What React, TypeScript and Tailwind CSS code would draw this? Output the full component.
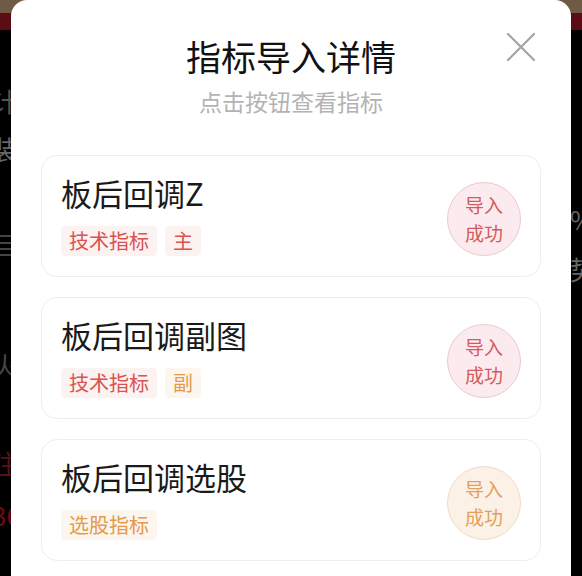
import React from "react";

type Tag = { label: string; tone: "red" | "orange" };

type Item = {
  name: string;
  tags: Tag[];
  tone: "red" | "orange";
};

const items: Item[] = [
  {
    name: "板后回调Z",
    tags: [
      { label: "技术指标", tone: "red" },
      { label: "主", tone: "red" },
    ],
    tone: "red",
  },
  {
    name: "板后回调副图",
    tags: [
      { label: "技术指标", tone: "red" },
      { label: "副", tone: "orange" },
    ],
    tone: "red",
  },
  {
    name: "板后回调选股",
    tags: [{ label: "选股指标", tone: "orange" }],
    tone: "orange",
  },
];

const tagTone = {
  red: "bg-[#fdf2f2] text-[#d9534f]",
  orange: "bg-[#fdf6ee] text-[#e5994a]",
};

const badgeTone = {
  red: "bg-[#fcebee] border-[#ebc9ce] text-[#d65a5a]",
  orange: "bg-[#fcf1e6] border-[#efdcc6] text-[#e3a05c]",
};

const CloseIcon = () => (
  <svg width="30" height="30" viewBox="0 0 30 30" fill="none">
    <path d="M2 2 L28 28 M28 2 L2 28" stroke="#a3a3a3" strokeWidth="2.2" strokeLinecap="round" />
  </svg>
);

const IndicatorCard = ({ item }: { item: Item }) => (
  <div className="flex items-center justify-between h-[122px] rounded-[16px] border border-[#ededed] bg-white pl-[19px] pr-[19px]">
    <div className="flex flex-col gap-[15px] pb-[2px]">
      <div className="text-[31px] leading-[36px] text-[#1a1a1a]">{item.name}</div>
      <div className="flex gap-[8px]">
        {item.tags.map((t) => (
          <span
            key={t.label}
            className={`h-[30px] px-[8px] flex items-center rounded-[4px] text-[20px] ${tagTone[t.tone]}`}
          >
            {t.label}
          </span>
        ))}
      </div>
    </div>
    <div
      className={`w-[74px] h-[74px] mt-[6px] rounded-full border flex flex-col items-center justify-center text-[19px] leading-[28px] ${badgeTone[item.tone]}`}
    >
      <span>导入</span>
      <span>成功</span>
    </div>
  </div>
);

export default function App() {
  return (
    <div
      className="relative w-[582px] h-[576px] overflow-hidden bg-black"
      style={{ fontFamily: '"Noto Sans CJK SC", "Noto Sans", sans-serif' }}
    >
      {/* page behind the sheet */}
      <div className="flex flex-col h-full">
        <div className="h-[13px] bg-[#6e5a45] shrink-0" />
        <div className="h-[17px] bg-[#5c0c14] shrink-0" />
        <div className="flex justify-between flex-1">
          <div className="flex flex-col ml-[-8px] text-[26px] leading-[30px]">
            <span className="mt-[56px] text-[#555]">计</span>
            <span className="mt-[18px] text-[#666]">装</span>
            <span className="mt-[66px] text-[#444]">目</span>
            <span className="mt-[90px] text-[#444]">火</span>
            <span className="mt-[68px] text-[#5a1018]">注</span>
            <span className="mt-[22px] text-[#6a0c16]">36</span>
          </div>
          <div className="flex flex-col mr-[-14px] text-[26px] leading-[30px] text-[#666]">
            <span className="mt-[174px]">%</span>
            <span className="mt-[20px]">势</span>
          </div>
        </div>
      </div>

      {/* sheet */}
      <div className="absolute left-[11px] top-0 w-[560px] h-[600px] bg-white rounded-t-[16px]">
        <div className="relative flex flex-col items-center pt-[35px]">
          <div className="text-[35px] leading-[42px] text-[#111]">指标导入详情</div>
          <div className="mt-[10px] text-[23px] leading-[28px] text-[#b3b3b3]">点击按钮查看指标</div>
          <button className="absolute right-[35px] top-[32px]">
            <CloseIcon />
          </button>
        </div>
        <div className="flex flex-col gap-[20px] px-[30px] mt-[40px]">
          {items.map((it) => (
            <IndicatorCard key={it.name} item={it} />
          ))}
        </div>
      </div>
    </div>
  );
}
